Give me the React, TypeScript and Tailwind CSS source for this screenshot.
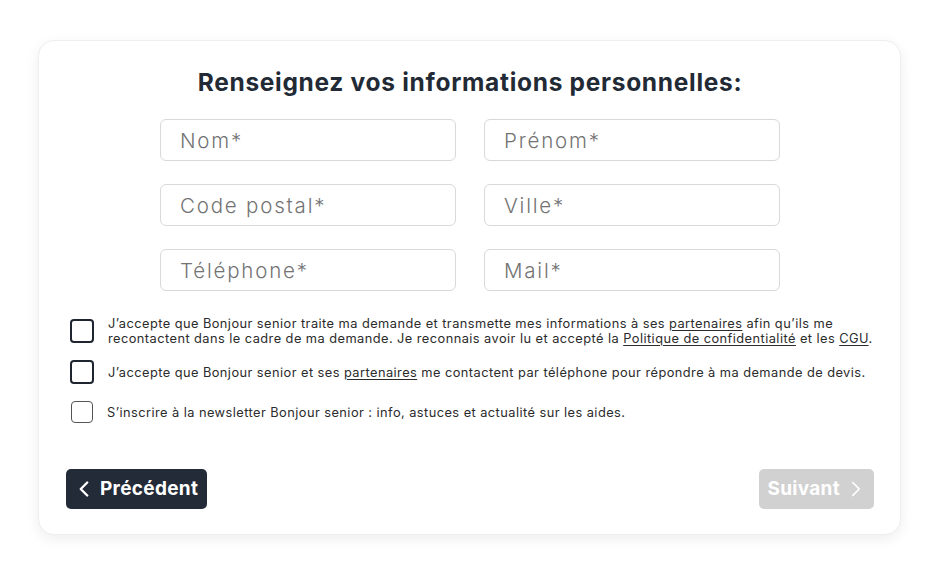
import { ChevronLeft, ChevronRight } from 'lucide-react'

const font = { fontFamily: 'Inter, "Noto Sans", sans-serif' }

function Field({ placeholder }: { placeholder: string }) {
  return (
    <input
      type="text"
      placeholder={placeholder}
      className="h-[42px] w-full rounded-md border border-[#d9d9d9] bg-white px-[19px] text-[20.5px] font-light tracking-[1.8px] text-[#333] outline-none placeholder:text-[#737373]"
    />
  )
}

function Box({ light }: { light?: boolean }) {
  return light ? (
    <span className="block h-[22px] w-[22px] shrink-0 rounded-[4px] border-[1.5px] border-[#555]" />
  ) : (
    <span className="block h-[24px] w-[24px] shrink-0 rounded-[4px] border-2 border-[#1f2530]" />
  )
}

function Link({ children }: { children: string }) {
  return <span className="underline underline-offset-2">{children}</span>
}

export default function App() {
  return (
    <div className="min-h-[571px] bg-white px-[38px] pt-[40px]" style={font}>
      <div className="h-[495px] rounded-2xl border border-[#eeeeee] bg-white pt-[26px] pr-[26px] pl-[27px] shadow-[0_4px_14px_rgba(0,0,0,0.07)]">
        <h1 className="text-center text-[24.5px] leading-[30px] font-bold tracking-[0.7px] text-[#222a35]">
          Renseignez vos informations personnelles:
        </h1>

        <div className="mx-auto mt-[22px] grid w-[620px] grid-cols-2 gap-x-[28px] gap-y-[23px]">
          <Field placeholder="Nom*" />
          <Field placeholder="Prénom*" />
          <Field placeholder="Code postal*" />
          <Field placeholder="Ville*" />
          <Field placeholder="Téléphone*" />
          <Field placeholder="Mail*" />
        </div>

        <div className="mt-[25px] flex flex-col gap-[14px] pl-[4px] text-[12.8px] leading-[15px] tracking-[0.45px] text-[#2b2b2b]">
          <label className="flex items-center gap-[14px]">
            <Box />
            <span className="flex flex-col whitespace-nowrap">
              <span>
                J’accepte que Bonjour senior traite ma demande et transmette mes informations à ses{' '}
                <Link>partenaires</Link> afin qu’ils me
              </span>
              <span>
                recontactent dans le cadre de ma demande. Je reconnais avoir lu et accepté la{' '}
                <Link>Politique de confidentialité</Link> et les <Link>CGU</Link>.
              </span>
            </span>
          </label>
          <label className="flex items-center gap-[14px]">
            <Box />
            <span className="whitespace-nowrap">
              J’accepte que Bonjour senior et ses <Link>partenaires</Link> me contactent par téléphone pour
              répondre à ma demande de devis.
            </span>
          </label>
          <label className="flex items-center gap-[14px] pl-px pt-[3px]">
            <Box light />
            <span>S’inscrire à la newsletter Bonjour senior : info, astuces et actualité sur les aides.</span>
          </label>
        </div>

        <div className="mt-[46px] flex items-center justify-between">
          <button className="flex h-[40px] items-center gap-[3px] rounded-[5px] bg-[#232b38] pl-[5px] pr-[9px] text-[19px] font-bold tracking-[0.3px] text-white">
            <ChevronLeft size={26} strokeWidth={2.2} />
            Précédent
          </button>
          <button className="flex h-[40px] items-center gap-[3px] rounded-[5px] bg-[#d1d1d1] pl-[8px] pr-[5px] text-[19px] font-bold tracking-[0.3px] text-white">
            Suivant
            <ChevronRight size={26} strokeWidth={1.6} />
          </button>
        </div>
      </div>
    </div>
  )
}
